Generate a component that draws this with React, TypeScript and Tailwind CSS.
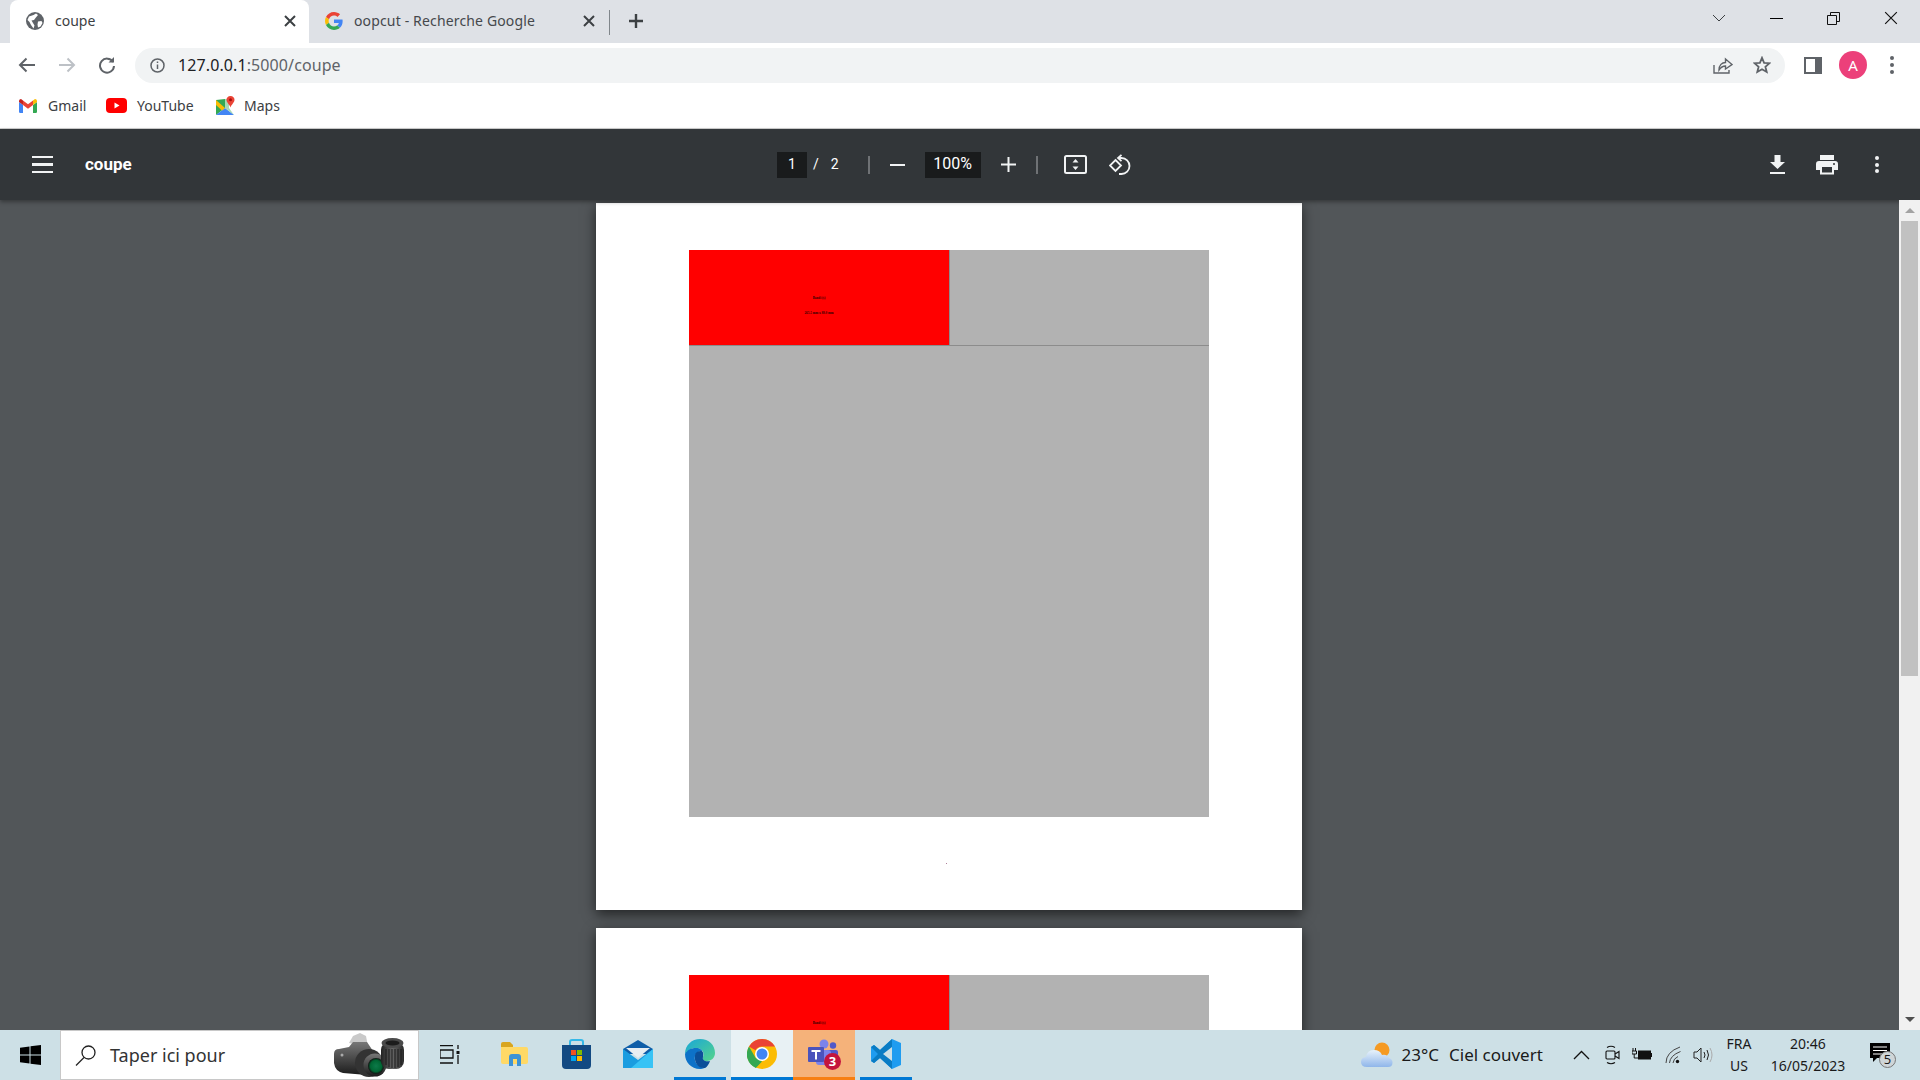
import React from "react";

const Globe = () => (
  <svg width="18" height="18" viewBox="0 0 18 18" className="shrink-0">
    <circle cx="9" cy="9" r="9" fill="#5f6368" />
    <path d="M3 4.500 L7.500 3 L10 1.500 L12 3 L9.500 6 L8 8 L5.500 8.500 L7 11 L8.500 13.500 L7.500 16.500 L5 13 L3.500 10 L1.500 8 Z M12 9.500 L15.500 9 L16.500 11 L14.500 14.500 L12 15.500 L11.500 12.500 Z" fill="#fff" />
  </svg>
);

const GoogleG = () => (
  <svg width="18" height="18" viewBox="0 0 48 48" className="shrink-0">
    <path fill="#EA4335" d="M24 9.500c3.500 0 6.700 1.200 9.200 3.600l6.900-6.900C35.900 2.400 30.500 0 24 0 14.600 0 6.500 5.400 2.600 13.200l8 6.200C12.500 13.700 17.800 9.500 24 9.500z" />
    <path fill="#4285F4" d="M47 24.500c0-1.600-.1-3.100-.4-4.500H24v9h12.900c-.6 3-2.200 5.500-4.800 7.200l7.700 6c4.500-4.200 7.200-10.300 7.200-17.700z" />
    <path fill="#FBBC05" d="M10.500 28.600c-.5-1.400-.8-3-.8-4.600s.3-3.200.8-4.600l-8-6.200C.9 16.500 0 20.100 0 24s.9 7.500 2.600 10.800l7.900-6.200z" />
    <path fill="#34A853" d="M24 48c6.500 0 11.900-2.100 15.900-5.800l-7.700-6c-2.200 1.500-4.900 2.300-8.200 2.300-6.200 0-11.500-4.200-13.400-9.900l-8 6.200C6.500 42.600 14.600 48 24 48z" />
  </svg>
);

const Gmail = () => (
  <svg width="18" height="14" viewBox="0 0 18 14" className="shrink-0">
    <path d="M0 3 L4 6 V14 H1.200 Q0 14 0 12.800 Z" fill="#4285f4" />
    <path d="M18 3 L14 6 V14 H16.800 Q18 14 18 12.800 Z" fill="#34a853" />
    <path d="M4 6 L4 1.500 L9 5.300 L14 1.500 L14 6 L9 9.800 Z" fill="#ea4335" />
    <path d="M0 3 V1.800 Q0.300 0 2 0 L4 1.500 V6 Z" fill="#c5221f" />
    <path d="M18 3 V1.800 Q17.700 0 16 0 L14 1.500 V6 Z" fill="#fbbc04" />
  </svg>
);

const YouTube = () => (
  <svg width="21" height="15" viewBox="0 0 21 15" className="shrink-0">
    <rect width="21" height="15" rx="4" fill="#ff0000" />
    <path d="M8.500 4.500 L13.500 7.500 L8.500 10.500 Z" fill="#fff" />
  </svg>
);

const Maps = () => (
  <svg width="20" height="20" viewBox="0 0 20 20" className="shrink-0">
    <path d="M0 4 L9 3 L9 12 L0 19 Z" fill="#34a853" />
    <path d="M0 19 L9 12 L18 19 Z" fill="#4285f4" />
    <path d="M0 4 L9 12 L6 14.500 L0 9 Z" fill="#fbbc04" />
    <path d="M9 3 L13 3 L13 12 L18 19 L9 12 Z" fill="#a8dab5" />
    <path d="M14.500 0 C17 0 18.500 1.800 18.500 3.800 C18.500 6.500 15.500 8.500 14.500 11.500 C13.500 8.500 10.500 6.500 10.500 3.800 C10.500 1.800 12 0 14.500 0 Z" fill="#ea4335" />
    <circle cx="14.500" cy="3.800" r="1.500" fill="#a50e0e" />
  </svg>
);

const X = ({ size = 12, color = "#3c4043", w = 2 }: { size?: number; color?: string; w?: number }) => (
  <svg width={size} height={size} viewBox="0 0 12 12" className="shrink-0">
    <path d="M1 1 L11 11 M11 1 L1 11" stroke={color} strokeWidth={w} fill="none" />
  </svg>
);

const Stroke = ({ w, h, children, sw = 2, c = "#5f6368" }: { w: number; h: number; children: React.ReactNode; sw?: number; c?: string }) => (
  <svg width={w} height={h} viewBox={`0 0 ${w} ${h}`} fill="none" stroke={c} strokeWidth={sw} className="shrink-0">
    {children}
  </svg>
);

function TabStrip() {
  return (
    <div className="flex h-[43px] shrink-0 items-stretch bg-[#dee1e6] pl-[10px]">
      <div className="flex w-[299px] items-center rounded-t-lg bg-white pb-[2px] pl-[16px] pr-[13px]">
        <Globe />
        <span className="ml-[11px] text-[14px] text-[#3c4043]">coupe</span>
        <span className="ml-auto"><X /></span>
      </div>
      <div className="flex w-[300px] items-center pb-[2px] pl-[16px] pr-[14px]">
        <GoogleG />
        <span className="ml-[11px] text-[14px] tracking-[0.15px] text-[#45484c]">oopcut - Recherche Google</span>
        <span className="ml-auto"><X /></span>
      </div>
      <div className="mb-[8px] mt-[10px] w-px bg-[#80868b]" />
      <div className="ml-[18px] flex items-center pb-[2px]">
        <Stroke w={16} h={16} sw={2.400} c="#3c4043"><path d="M8 1 V15 M1 8 H15" /></Stroke>
      </div>
      <div className="ml-auto flex items-center pb-[7px] pr-[22px]">
        <Stroke w={14} h={8} sw={1} c="#3c4043"><path d="M1 1 L7 7 L13 1" /></Stroke>
        <div className="ml-[44px] h-px w-[13px] bg-black" />
        <div className="ml-[44px]">
          <Stroke w={13} h={13} sw={1} c="#111"><path d="M0.500 3.500 H9.500 V12.500 H0.500 Z M3.500 3.500 V0.500 H12.500 V9.500 H9.500" /></Stroke>
        </div>
        <div className="ml-[44px]"><X size={14} w={1} color="#111" /></div>
      </div>
    </div>
  );
}

function AddressBar() {
  return (
    <div className="flex h-[42px] shrink-0 items-center bg-white pt-[2px]">
      <div className="ml-[18px]">
        <Stroke w={18} h={16}><path d="M17 8 H2 M8.500 1.500 L2 8 L8.500 14.500" /></Stroke>
      </div>
      <div className="ml-[22px]">
        <Stroke w={18} h={16} c="#bdc1c6"><path d="M1 8 H16 M9.500 1.500 L16 8 L9.500 14.500" /></Stroke>
      </div>
      <div className="ml-[22px]">
        <Stroke w={18} h={18}>
          <path d="M15 6 A7 7 0 1 0 16 10" />
          <path d="M16 1 V6.500 H10.500" fill="#5f6368" stroke="none" />
        </Stroke>
      </div>
      <div className="ml-[19px] flex h-[35px] w-[1650px] items-center rounded-full bg-[#f1f3f4] pl-[15px] pr-[14px]">
        <Stroke w={15} h={15} sw={1.500}>
          <circle cx="7.500" cy="7.500" r="6.500" />
          <path d="M7.500 6.500 V11 M7.500 3.500 V5" />
        </Stroke>
        <span className="ml-[13px] text-[16px] tracking-[0.1px] text-[#202124]">
          127.0.0.1<span className="text-[#5f6368]">:5000/coupe</span>
        </span>
        <div className="ml-auto flex items-center">
          <Stroke w={20} h={18} sw={1.400}>
            <path d="M1 9 V17 H16 V14" />
            <path d="M6 14 C6 9 9 6.500 12.500 6.500 V3 L19 8.500 L12.500 13 V10 C10 10 8 11 6 14 Z" />
          </Stroke>
          <div className="ml-[20px]">
            <Stroke w={18} h={18} sw={1.800}>
              <path d="M9 1.800 L11.100 6.800 L16.500 7.200 L12.400 10.700 L13.700 16 L9 13.200 L4.300 16 L5.600 10.700 L1.500 7.200 L6.900 6.800 Z" />
            </Stroke>
          </div>
        </div>
      </div>
      <div className="ml-[19px] flex h-[17px] w-[18px] justify-start bg-[#5f6368] p-[2px]">
        <div className="h-full w-[9px] bg-white" />
      </div>
      <div className="ml-[17px] flex h-[28px] w-[28px] items-center justify-center rounded-full bg-[#ec407a] text-[15px] text-white">A</div>
      <div className="ml-[23px] flex flex-col gap-[3px]">
        <div className="h-[4px] w-[4px] rounded-full bg-[#5f6368]" />
        <div className="h-[4px] w-[4px] rounded-full bg-[#5f6368]" />
        <div className="h-[4px] w-[4px] rounded-full bg-[#5f6368]" />
      </div>
    </div>
  );
}

function Bookmarks() {
  return (
    <div className="flex h-[43px] shrink-0 items-center bg-white pb-[2px] pl-[19px] text-[14px] text-[#3c4043]">
      <Gmail />
      <span className="ml-[11px] w-[37px]">Gmail</span>
      <span className="ml-[21px]"><YouTube /></span>
      <span className="ml-[10px] w-[58px]">YouTube</span>
      <span className="ml-[21px]"><Maps /></span>
      <span className="ml-[8px]">Maps</span>
    </div>
  );
}

function PdfToolbar() {
  return (
    <div className="relative z-10 flex h-[71px] shrink-0 items-center bg-[#323639] text-white shadow-[0_2px_4px_rgba(0,0,0,0.35)] font-['Roboto',sans-serif]">
      <div className="ml-[32px] flex flex-col gap-[5px]">
        <div className="h-[2.500px] w-[21px] bg-[#f1f3f4]" />
        <div className="h-[2.500px] w-[21px] bg-[#f1f3f4]" />
        <div className="h-[2.500px] w-[21px] bg-[#f1f3f4]" />
      </div>
      <span className="ml-[32px] w-[692px] text-[17px] font-bold">coupe</span>
      <div className="flex h-[26px] w-[30px] items-center justify-center bg-[#191b1c] text-[14px]">1</div>
      <span className="ml-[6px] text-[14px]">/</span>
      <span className="ml-[12px] text-[14px]">2</span>
      <div className="ml-[29px] h-[18px] w-[2px] bg-[#6f7275]" />
      <div className="ml-[20px] h-[2px] w-[15px] bg-[#f1f3f4]" />
      <div className="ml-[20px] flex h-[26px] w-[56px] items-center justify-center bg-[#191b1c] pb-[2px] text-[16px]">100%</div>
      <div className="ml-[20px]">
        <Stroke w={15} h={15} c="#f1f3f4"><path d="M7.500 0 V15 M0 7.500 H15" /></Stroke>
      </div>
      <div className="ml-[20px] h-[18px] w-[2px] bg-[#6f7275]" />
      <div className="ml-[26px]">
        <svg width="23" height="19" viewBox="0 0 23 19" className="block">
          <rect x="1" y="1" width="21" height="17" rx="1.500" fill="none" stroke="#f1f3f4" strokeWidth="2" />
          <path d="M11.500 4 L14.500 7.500 H8.500 Z M11.500 15 L8.500 11.500 H14.500 Z" fill="#f1f3f4" />
        </svg>
      </div>
      <div className="ml-[22px]">
        <svg width="22" height="22" viewBox="0 0 22 22" fill="none" stroke="#f1f3f4" strokeWidth="1.800" className="block">
          <path d="M9 4 H12.500 A8 8 0 0 1 12.500 20 H10" />
          <path d="M12.500 0.800 L9 4 L12.500 7.200" />
          <path d="M6.500 6 L12 11.500 L6.500 17 L1 11.500 Z" />
        </svg>
      </div>
      <div className="ml-auto mr-[41px] flex items-center">
        <svg width="15" height="19" viewBox="0 0 15 19" className="block">
          <path d="M4.500 0 H10.500 V7 H15 L7.500 14 L0 7 H4.500 Z M0 17 H15 V19 H0 Z" fill="#f1f3f4" />
        </svg>
        <div className="ml-[31px]">
          <svg width="22" height="20" viewBox="0 0 22 20" className="block">
            <path d="M4 0 H18 V5 H4 Z" fill="#f1f3f4" />
            <path fillRule="evenodd" d="M3 6 H19 Q22 6 22 9 V15 H18 V19.500 H4 V15 H0 V9 Q0 6 3 6 Z M6 12 V17.500 H16 V12 Z" fill="#f1f3f4" />
            <circle cx="18" cy="9" r="1" fill="#323639" />
          </svg>
        </div>
        <div className="ml-[37px] flex flex-col gap-[2.500px]">
          <div className="h-[4px] w-[4px] rounded-full bg-[#f1f3f4]" />
          <div className="h-[4px] w-[4px] rounded-full bg-[#f1f3f4]" />
          <div className="h-[4px] w-[4px] rounded-full bg-[#f1f3f4]" />
        </div>
      </div>
    </div>
  );
}

function PdfPage({ second }: { second?: boolean }) {
  return (
    <div className={`mx-auto h-[707px] w-[706px] shrink-0 bg-white pl-[93px] pt-[47px] shadow-[0_4px_12px_rgba(0,0,0,0.6)] font-['Liberation_Serif',serif] ${second ? "mt-[18px]" : "mt-[3px]"}`}>
      <div className="w-[520px] bg-[#b2b2b2]">
        <div className="flex h-[96px] border-b border-[#8c8c8c]">
          <div className="flex h-[95px] w-[260px] flex-col items-center bg-[#ff0000] pt-[46px] text-[3.300px] leading-[4px] text-[#300000]">
            <span className="font-bold">Bandi (s)</span>
            {!second && <span className="mt-[11px] font-bold">265.5 mm x 88.0 mm</span>}
          </div>
          <div className="w-px bg-[#8c8c8c]" />
        </div>
        <div className="h-[471px]" />
      </div>
      <div className="ml-[257px] mt-[46px] h-px w-px bg-[#b0809a]" />
    </div>
  );
}

function Scrollbar() {
  return (
    <div className="relative z-20 flex w-[21px] shrink-0 flex-col items-center bg-[#f1f1f1]">
      <div className="flex h-[21px] items-center">
        <div className="h-0 w-0 border-x-[5px] border-b-[5px] border-x-transparent border-b-[#a3a3a3]" />
      </div>
      <div className="h-[455px] w-[17px] bg-[#c1c1c1]" />
      <div className="mt-auto flex h-[21px] items-center">
        <div className="h-0 w-0 border-x-[5px] border-t-[5px] border-x-transparent border-t-[#505050]" />
      </div>
    </div>
  );
}

const WinLogo = () => (
  <svg width="21" height="20" viewBox="0 0 21 20"><path d="M0 2.800 L9.500 1.500 V9.400 H0 Z M10.500 1.300 L21 0 V9.400 H10.500 Z M0 10.500 H9.500 V18.500 L0 17.200 Z M10.500 10.500 H21 V20 L10.500 18.700 Z" fill="#000" /></svg>
);

const Camera = () => (
  <svg width="72" height="44" viewBox="0 0 72 44" className="block">
    <defs>
      <linearGradient id="cb" x1="0" y1="0" x2="0" y2="1"><stop offset="0" stopColor="#777" /><stop offset="1" stopColor="#1b1b1b" /></linearGradient>
      <linearGradient id="lz" x1="0" y1="0" x2="1" y2="0"><stop offset="0" stopColor="#222" /><stop offset="0.5" stopColor="#666" /><stop offset="1" stopColor="#2a2a2a" /></linearGradient>
      <radialGradient id="gl"><stop offset="0" stopColor="#0d7a4a" /><stop offset="0.7" stopColor="#063" /><stop offset="1" stopColor="#111" /></radialGradient>
    </defs>
    <path d="M16 10 L20 3 L27 0 L33 3 L35 14 Z" fill="#c9c9c9" />
    <path d="M1 21 Q1 16 6 16 L16 14 L20 9 L34 9 L40 18 L44 30 L34 42 L10 40 Q2 38 1 30 Z" fill="url(#cb)" />
    <circle cx="9" cy="22" r="1.500" fill="#aaa" />
    <circle cx="36" cy="30" r="14" fill="#333" />
    <circle cx="42" cy="32" r="11.500" fill="url(#cb)" />
    <circle cx="43" cy="33" r="8" fill="url(#gl)" />
    <rect x="48" y="9" width="23" height="27" rx="8" fill="url(#lz)" />
    <ellipse cx="59.500" cy="10" rx="11" ry="5" fill="#4a4a4a" />
    <ellipse cx="59.500" cy="10" rx="7" ry="2.500" fill="#1c1c1c" />
    <path d="M53 16 V32 M56 16 V34 M59 16 V35 M62 16 V35 M65 16 V34 M68 16 V32" stroke="#1a1a1a" strokeWidth="1" />
  </svg>
);

const Folder = () => (
  <svg width="27" height="24" viewBox="0 0 27 24">
    <path d="M0 2 Q0 0 2 0 H9 L12 3 V6 H0 Z" fill="#d8a520" />
    <path d="M0 5 H25 Q27 5 27 7 V20 Q27 22 25 22 H2 Q0 22 0 20 Z" fill="#ffd966" />
    <path d="M8 24 V15 Q8 12 11 12 H17 Q20 12 20 15 V24 H16 V17 H12 V24 Z" fill="#3d93d6" />
  </svg>
);

const Store = () => (
  <svg width="29" height="30" viewBox="0 0 29 30">
    <path d="M8 7 V3 Q8 1 10 1 H19 Q21 1 21 3 V7" fill="none" stroke="#35b8e8" strokeWidth="2" />
    <path d="M0 6 H29 V26 Q29 30 25 30 H4 Q0 30 0 26 Z" fill="#134a82" />
    <rect x="9" y="11" width="5" height="5" fill="#f25022" />
    <rect x="15" y="11" width="5" height="5" fill="#7fba00" />
    <rect x="9" y="17" width="5" height="5" fill="#00a4ef" />
    <rect x="15" y="17" width="5" height="5" fill="#ffb900" />
  </svg>
);

const Mail = () => (
  <svg width="30" height="28" viewBox="0 0 30 28">
    <path d="M0 9 L15 0 L30 9 V14 H0 Z" fill="#0f5ea8" />
    <path d="M3 8 H27 L15 18 Z" fill="#e8eef2" />
    <path d="M0 9 L15 20 L30 9 V28 H0 Z" fill="#1a9de0" />
    <path d="M30 9 V28 H8 Z" fill="#38c3f5" />
  </svg>
);

const Edge = () => (
  <svg width="30" height="30" viewBox="0 0 30 30">
    <defs>
      <linearGradient id="eg1" x1="0" y1="0" x2="1" y2="1"><stop offset="0" stopColor="#19a6d9" /><stop offset="1" stopColor="#55d48a" /></linearGradient>
    </defs>
    <path d="M15 0 C24 0 30 6 30 14 C30 19 26 22 22 22 C18 22 17 20 18 18 C20 14 17 9 11 9 C6 9 2 12 0 15 C0 6 7 0 15 0 Z" fill="url(#eg1)" />
    <path d="M0 15 C2 11 6 9 11 9 C15 9 17 11 17 12 C12 12 9 16 10 21 C11 26 16 29 21 28.500 C18 30 16 30 15 30 C6 30 0 23 0 15 Z" fill="#0d72c8" />
    <path d="M10 17 C10 13 13 12 17 12 C19 14 18 16 18 18 C17 21 20 23 25 22 C24 25 22 28 20 29 C14 30 9 24 10 17 Z" fill="#0b4f99" />
  </svg>
);

const Chrome = () => (
  <svg width="30" height="30" viewBox="0 0 30 30">
    <circle cx="15" cy="15" r="15" fill="#fbbc04" />
    <path d="M15 0 A15 15 0 0 1 28 7.500 H15 A7.500 7.500 0 0 0 8.500 11.250 L2 7.500 A15 15 0 0 1 15 0 Z" fill="#ea4335" />
    <path d="M2 7.500 L8.500 18.700 L15 22.500 L8.800 29 A15 15 0 0 1 2 7.500 Z" fill="#34a853" />
    <circle cx="15" cy="15" r="7" fill="#fff" />
    <circle cx="15" cy="15" r="5.500" fill="#4285f4" />
  </svg>
);

const Teams = () => (
  <div className="relative h-[30px] w-[32px]">
    <svg width="32" height="30" viewBox="0 0 32 30" className="absolute left-0 top-0">
      <circle cx="16" cy="5" r="4.500" fill="#7b83eb" />
      <circle cx="25" cy="6.500" r="3.200" fill="#5059c9" />
      <rect x="17" y="11" width="13" height="13" rx="2" fill="#5059c9" />
      <rect x="8" y="11" width="15" height="15" rx="3" fill="#7b83eb" />
      <rect x="0" y="8" width="16" height="15" rx="1" fill="#4b53bc" />
      <path d="M3.500 11 H12.500 V13 H9 V20.500 H7 V13 H3.500 Z" fill="#fff" />
    </svg>
    <div className="absolute left-[16px] top-[14px] flex h-[17px] w-[17px] items-center justify-center rounded-full bg-[#c4143c] text-[13px] font-bold leading-none text-white">3</div>
  </div>
);

const VSCode = () => (
  <svg width="30" height="30" viewBox="0 0 30 30">
    <path d="M21 0 L30 4 V26 L21 30 L9 19 L3 24 L0 22 V8 L3 6 L9 11 Z" fill="#1f9cf0" />
    <path d="M21 0 L21 30 L9 19 L3 24 L0 22 L7 15 L0 8 L3 6 L9 11 Z" fill="#0a7cc4" />
    <path d="M21 8 L12 15 L21 22 Z" fill="#cde0e6" />
  </svg>
);

function AppTile({ children, tone }: { children: React.ReactNode; tone?: "open" | "active" | "orange" }) {
  const bg = tone === "active" ? "bg-[#e8f1f4]" : tone === "orange" ? "bg-[#f5b27a]" : "";
  const line =
    tone === "active"
      ? "mx-0 bg-[#0078d4]"
      : tone === "orange"
      ? "mx-0 bg-[#f77f12]"
      : tone === "open"
      ? "mx-[5px] bg-[#0078d4]"
      : "mx-[5px] bg-transparent";
  return (
    <div className={`flex h-full w-[62px] flex-col ${bg}`}>
      <div className="flex flex-1 items-center justify-center">{children}</div>
      <div className={`h-[3px] ${line}`} />
    </div>
  );
}

function Taskbar() {
  return (
    <div className="relative z-20 flex h-[50px] shrink-0 items-center bg-[#cde0e6] font-['Noto_Sans',sans-serif] text-[#1a1a1a]">
      <div className="flex w-[60px] justify-center"><WinLogo /></div>
      <div className="flex h-full w-[359px] items-center border border-[#c8c8c8] bg-white pl-[14px]">
        <svg width="21" height="21" viewBox="0 0 21 21" fill="none" stroke="#222" strokeWidth="1.300">
          <circle cx="13.500" cy="7.500" r="6.500" /><path d="M9 12.500 L1 20.500" />
        </svg>
        <span className="ml-[14px] text-[18px] text-[#333]">Taper ici pour</span>
        <div className="ml-auto mr-[13px]"><Camera /></div>
      </div>
      <div className="flex w-[62px] justify-center">
        <svg width="20" height="20" viewBox="0 0 20 20" fill="none" stroke="#111" strokeWidth="1.300">
          <path d="M0 0.700 H13 M0 5 H13 V13 H0 Z M0 18 H13 M18 0 V4 M18 10 V19" />
          <rect x="16.500" y="6" width="3" height="3" fill="#111" stroke="none" />
        </svg>
      </div>
      <div className="flex h-full">
        <div className="w-[2px]" />
        <AppTile><Folder /></AppTile>
        <AppTile><Store /></AppTile>
        <AppTile><Mail /></AppTile>
        <AppTile tone="open"><Edge /></AppTile>
        <AppTile tone="active"><Chrome /></AppTile>
        <AppTile tone="orange"><Teams /></AppTile>
        <AppTile tone="open"><VSCode /></AppTile>
      </div>
      <div className="ml-auto flex h-full items-center">
        <svg width="32" height="28" viewBox="0 0 32 28">
          <defs>
            <linearGradient id="cl" x1="0" y1="0" x2="0" y2="1"><stop offset="0" stopColor="#e8f2fb" /><stop offset="1" stopColor="#8fb6ea" /></linearGradient>
          </defs>
          <circle cx="21" cy="9" r="7.500" fill="#f59a23" />
          <path d="M6 26 Q0 26 0 21 Q0 16.500 5 16 Q6 9 13 9 Q19 9 21 14 Q26 13 28 17 Q31.500 18 31.500 21.500 Q31.500 26 27 26 Z" fill="url(#cl)" />
        </svg>
        <span className="ml-[9px] text-[17px]">23°C</span>
        <span className="ml-[10px] w-[96px] text-[17px]">Ciel couvert</span>
        <div className="ml-[28px]">
          <Stroke w={17} h={10} sw={1.300} c="#111"><path d="M1 9 L8.500 1.500 L16 9" /></Stroke>
        </div>
        <div className="ml-[15px]">
          <svg width="15" height="20" viewBox="0 0 15 20" fill="none" stroke="#111" strokeWidth="1.100">
            <path d="M2 2.500 Q6 0 10 2.500 M2 17.500 Q6 20 10 17.500" />
            <rect x="1" y="6" width="9" height="8" rx="1" />
            <path d="M10 9 L14 6.500 V13.500 L10 11" />
          </svg>
        </div>
        <div className="ml-[12px]">
          <svg width="20" height="14" viewBox="0 0 20 14">
            <path d="M1 0 V3 M3.500 0 V3 M0 3 H4.500 V6 H0 Z M2.200 6 V10 H6" stroke="#111" fill="none" />
            <rect x="6" y="2.500" width="13" height="9" fill="#111" />
            <rect x="19" y="5" width="1" height="4" fill="#111" />
          </svg>
        </div>
        <div className="ml-[13px]">
          <svg width="18" height="18" viewBox="0 0 18 18" fill="none" stroke="#444" strokeWidth="1">
            <path d="M1 17 Q1 6 15 1 M4.500 17 Q5 9.500 15.500 5.500 M8 17 Q8.500 12.500 13 10.500" />
            <circle cx="12.500" cy="15.500" r="1.700" fill="#111" stroke="none" />
          </svg>
        </div>
        <div className="ml-[10px]">
          <svg width="20" height="16" viewBox="0 0 20 16" fill="none" stroke="#222" strokeWidth="1">
            <path d="M1 5 H4 L8 1 V15 L4 11 H1 Z" />
            <path d="M11 5 Q13 8 11 11 M14 3 Q17 8 14 13" />
            <path d="M17 1 Q21 8 17 15" stroke="#aaa" />
          </svg>
        </div>
        <div className="ml-[13px] flex w-[26px] flex-col items-center text-[14px] leading-[22px]">
          <span>FRA</span>
          <span>US</span>
        </div>
        <div className="ml-[18px] flex w-[76px] flex-col items-center text-[14px] leading-[22px]">
          <span>20:46</span>
          <span>16/05/2023</span>
        </div>
        <div className="relative ml-[24px] mr-[30px] h-[24px] w-[20px]">
          <svg width="20" height="20" viewBox="0 0 20 20" className="absolute left-0 top-0">
            <path d="M0 0 H20 V15 H7 L3 19 V15 H0 Z" fill="#000" />
            <path d="M3 4 H17 M3 7.500 H17 M3 11 H17" stroke="#fff" strokeWidth="1" />
          </svg>
          <div className="absolute left-[9px] top-[8px] flex h-[17px] w-[17px] items-center justify-center rounded-full border border-[#777] bg-[#cfd6d8] text-[13px] leading-none">5</div>
        </div>
      </div>
    </div>
  );
}

export default function App() {
  return (
    <div className="flex h-screen w-screen flex-col overflow-hidden bg-white font-['Noto_Sans',sans-serif]">
      <TabStrip />
      <AddressBar />
      <Bookmarks />
      <div className="h-px shrink-0 bg-[#d0d0d0]" />
      <PdfToolbar />
      <div className="flex min-h-0 flex-1">
        <div className="flex min-w-0 flex-1 flex-col overflow-hidden bg-[#525659] pr-px">
          <PdfPage />
          <PdfPage second />
        </div>
        <Scrollbar />
      </div>
      <Taskbar />
    </div>
  );
}
